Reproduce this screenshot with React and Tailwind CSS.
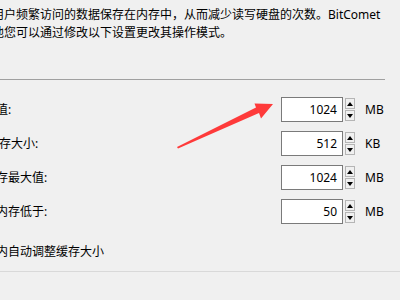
import React from "react";

const rows = [
    { label: "缓存最小值:", shift: "-ml-[52px]", value: "1024", unit: "MB" },
    { label: "磁盘缓存大小:", shift: "-ml-[37px]", value: "512", unit: "KB" },
    { label: "写缓存最大值:", shift: "-ml-[28px]", value: "1024", unit: "MB" },
    { label: "可用内存低于:", shift: "-ml-[28px]", value: "50", unit: "MB" },
];

function Spinner() {
    return (
        <div className="flex flex-col gap-[1px] ml-[2px]">
            <div className="w-[10px] h-[11px] border border-[#b5b5b5] bg-[#f0f0f0] flex items-center justify-center">
                <svg width="6" height="4" viewBox="0 0 6 4">
                    <polygon points="0,4 6,4 3,0" fill="#000" />
                </svg>
            </div>
            <div className="w-[10px] h-[11px] border border-[#b5b5b5] bg-[#f0f0f0] flex items-center justify-center">
                <svg width="6" height="4" viewBox="0 0 6 4">
                    <polygon points="0,0 6,0 3,4" fill="#000" />
                </svg>
            </div>
        </div>
    );
}

export default function App() {
    return (
        <div
            className="relative w-[400px] h-[300px] bg-[#f0f0f0] overflow-hidden text-[12px] text-black"
            style={{ fontFamily: '"Noto Sans", "Noto Sans CJK SC", sans-serif' }}
        >
            {/* description */}
            <div className="pt-[6px] leading-[18px] whitespace-nowrap">
                <div className="-ml-[8px]">用户频繁访问的数据保存在内存中，从而减少读写硬盘的次数。BitComet</div>
                <div className="-ml-[8px]">他您可以通过修改以下设置更改其操作模式。</div>
            </div>

            <div className="mt-[37px] h-px w-[385px] bg-[#a0a0a0]" />

            <div className="mt-[17px] flex flex-col gap-[9px]">
                {rows.map((r) => (
                    <div key={r.label} className="flex items-center h-[25px]">
                        <div className="flex-1 whitespace-nowrap leading-[18px]">
                            <span className={"inline-block " + r.shift}>{r.label}</span>
                        </div>
                        <div className="w-[62px] h-[25px] border border-[#7a7a7a] bg-white flex items-center justify-end pr-[5px] leading-none">
                            {r.value}
                        </div>
                        <Spinner />
                        <div className="w-[35px] ml-[10px] leading-none">{r.unit}</div>
                    </div>
                ))}
            </div>

            <div className="mt-[19px] leading-[18px] whitespace-nowrap">
                <span className="-ml-[28px] inline-block">范围内自动调整缓存大小</span>
            </div>

            <div className="mt-[10px] h-px w-full bg-[#d9d9d9]" />

            {/* red annotation arrow */}
            <svg className="absolute left-0 top-0" width="400" height="300" viewBox="0 0 400 300">
                <polygon
                    points="177,147 256,107.5 254.5,103.5 273,104 261,118.5 259,113 178,148.5"
                    fill="#fe3a3a"
                />
            </svg>
        </div>
    );
}
